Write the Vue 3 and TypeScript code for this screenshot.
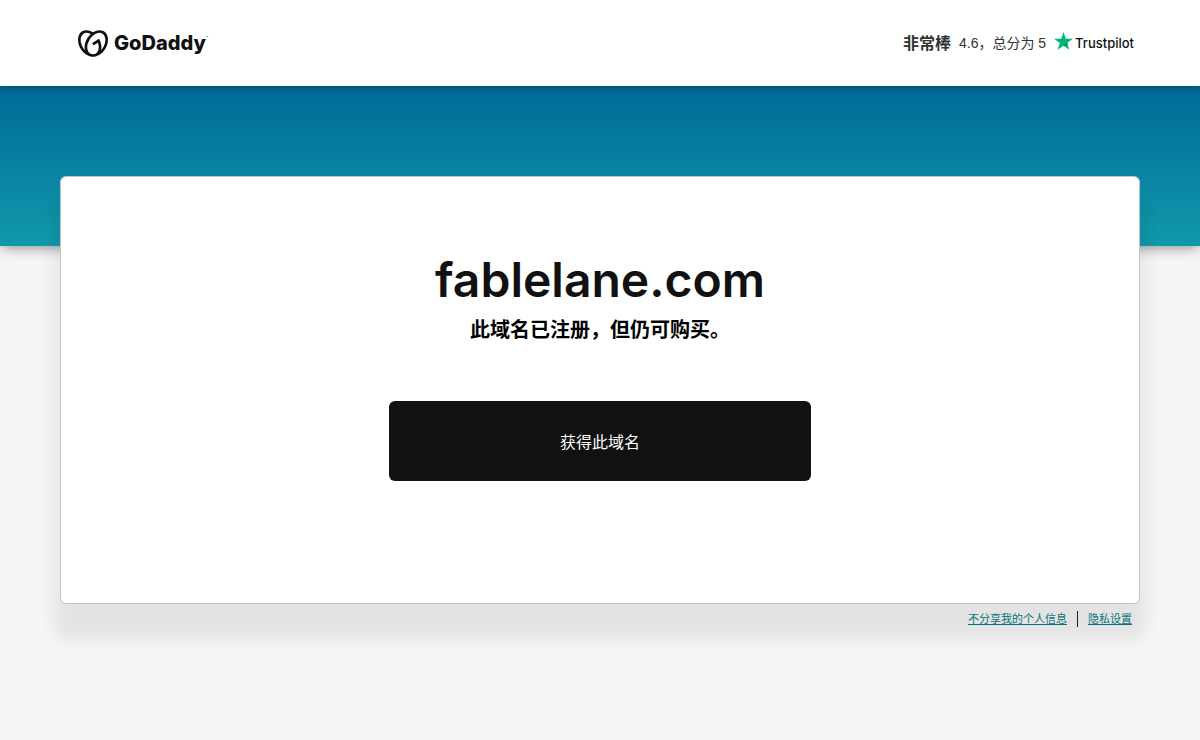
<script setup lang="ts">
const domain = 'fablelane.com'
const score = '4.6'
const best = '5'
const links: { label: string; href: string }[] = [
  { label: '不分享我的个人信息', href: '#do-not-share' },
  { label: '隐私设置', href: '#privacy' },
]
</script>

<template>
  <div class="page">
    <header class="topbar">
      <a class="brand" href="#home" aria-label="GoDaddy">
        <svg class="brand-mark" viewBox="0 1.3 24 21.4" aria-hidden="true">
          <path
            d="M20.702 2.29c-2.494-1.554-5.778-1.187-8.706.654C9.076 1.104 5.79.736 3.3 2.29c-3.941 2.463-4.42 8.806-1.07 14.167 2.47 3.954 6.333 6.269 9.77 6.226 3.439.043 7.301-2.273 9.771-6.226 3.347-5.361 2.872-11.704-1.069-14.167zM4.042 15.328a12.838 12.838 0 01-1.546-3.541 10.12 10.12 0 01-.336-3.338c.15-1.98.956-3.524 2.27-4.345 1.315-.822 3.052-.87 4.903-.137.281.113.556.24.825.382A15.11 15.11 0 007.5 7.54c-2.035 3.255-2.655 6.878-1.945 9.765a13.247 13.247 0 01-1.514-1.98zm17.465-3.541a12.866 12.866 0 01-1.547 3.54 13.25 13.25 0 01-1.513 1.984c.635-2.589.203-5.76-1.353-8.734a.39.39 0 00-.563-.153l-4.852 3.032a.397.397 0 00-.126.546l.712 1.139a.395.395 0 00.547.126l3.145-1.965c.101.306.203.606.28.916.296 1.086.41 2.214.335 3.337-.15 1.982-.956 3.525-2.27 4.347a4.437 4.437 0 01-2.25.65h-.101a4.432 4.432 0 01-2.25-.65c-1.314-.822-2.121-2.365-2.27-4.347-.074-1.123.039-2.251.335-3.337a13.212 13.212 0 014.05-6.482 10.148 10.148 0 012.849-1.765c1.845-.733 3.586-.685 4.9.137 1.316.822 2.122 2.365 2.271 4.345a10.146 10.146 0 01-.33 3.334z"
          />
        </svg>
        <span class="brand-name">GoDaddy</span>
        <span class="brand-tm">™</span>
      </a>
      <div class="rating">
        <strong class="rating-word">非常棒</strong>
        <span class="rating-score">{{ score }}，总分为 {{ best }}</span>
        <a class="trustpilot" href="#trustpilot">
          <svg class="star" viewBox="0 0 20 19" aria-hidden="true">
            <path fill="#00b67a" d="M10 0l2.4 7.2H20l-6.1 4.4 2.3 7.2L10 14.4l-6.2 4.4 2.3-7.2L0 7.2h7.6z" />
            <path fill="#005128" d="M14.4 13.2l-.5-1.6-3.9 2.8z" />
          </svg>
          <span>Trustpilot</span>
        </a>
      </div>
    </header>

    <div class="banner"></div>

    <main class="content">
      <section class="card">
        <h1>{{ domain }}</h1>
        <p class="status">此域名已注册，但仍可购买。</p>
        <button class="cta" type="button">获得此域名</button>
      </section>
      <footer class="legal">
        <a v-for="link in links" :key="link.href" :href="link.href">{{ link.label }}</a>
      </footer>
    </main>
  </div>
</template>

<style>
body {
  background: #f5f5f5;
}
</style>

<style scoped>
.page {
  min-height: 100vh;
  font-family: "Liberation Sans", "Noto Sans CJK SC", sans-serif;
  color: #111;
}
.topbar {
  position: relative;
  z-index: 1;
  display: flex;
  align-items: center;
  justify-content: space-between;
  box-sizing: border-box;
  height: 86px;
  padding: 0 66px 0 78px;
  background: #fff;
  box-shadow: 0 2px 8px rgba(0, 0, 0, 0.3);
}
.brand {
  display: flex;
  align-items: center;
  color: #111;
  text-decoration: none;
}
.brand-mark {
  width: 30px;
  height: 27px;
  margin-right: 6px;
  fill: #111;
}
.brand-name {
  font: 800 20px/28px Inter, sans-serif;
}
.brand-tm {
  align-self: flex-start;
  font: 4px/18px Inter, sans-serif;
}
.rating {
  display: flex;
  align-items: center;
  color: #333;
}
.rating-word {
  margin-right: 8px;
  padding-top: 2px;
  font-size: 16px;
  font-weight: 700;
  line-height: 24px;
}
.rating-score {
  margin-right: 8px;
  font: 14px/24px "Liberation Sans", "Noto Sans CJK SC", sans-serif;
}
.trustpilot {
  display: flex;
  align-items: center;
  color: #111;
  font: 500 13px/24px Inter, sans-serif;
  text-decoration: none;
}
.star {
  width: 19px;
  height: 18px;
  margin: 0 2px 4px 0;
}
.banner {
  height: 160px;
  background: linear-gradient(#006a98, #1199ab);
  box-shadow: 0 4px 12px -2px rgba(0, 0, 0, 0.4);
}
.content {
  position: relative;
  margin: -70px 60px 0;
}
.card {
  display: flex;
  flex-direction: column;
  align-items: center;
  padding: 71px 24px 122px;
  border: 1px solid #c4c8c8;
  border-radius: 6px;
  background: #fff;
  box-shadow: 0 30px 16px 6px rgba(0, 0, 0, 0.07);
}
h1 {
  margin: 0;
  font: 600 48px/64px Inter, sans-serif;
}
.status {
  margin: 0 0 53px;
  color: #000;
  font-size: 20px;
  font-weight: 700;
  line-height: 36px;
}
.cta {
  width: 100%;
  max-width: 422px;
  height: 80px;
  border: 0;
  border-radius: 6px;
  background: #111;
  color: #fff;
  font-family: inherit;
  font-size: 16px;
  cursor: pointer;
}
.legal {
  display: flex;
  justify-content: flex-end;
  padding: 7px 8px;
  font-size: 11px;
  line-height: 16px;
}
.legal a {
  color: #09757a;
}
.legal a + a {
  margin-left: 10px;
  padding-left: 10px;
  border-left: 1px solid #222;
}
</style>
